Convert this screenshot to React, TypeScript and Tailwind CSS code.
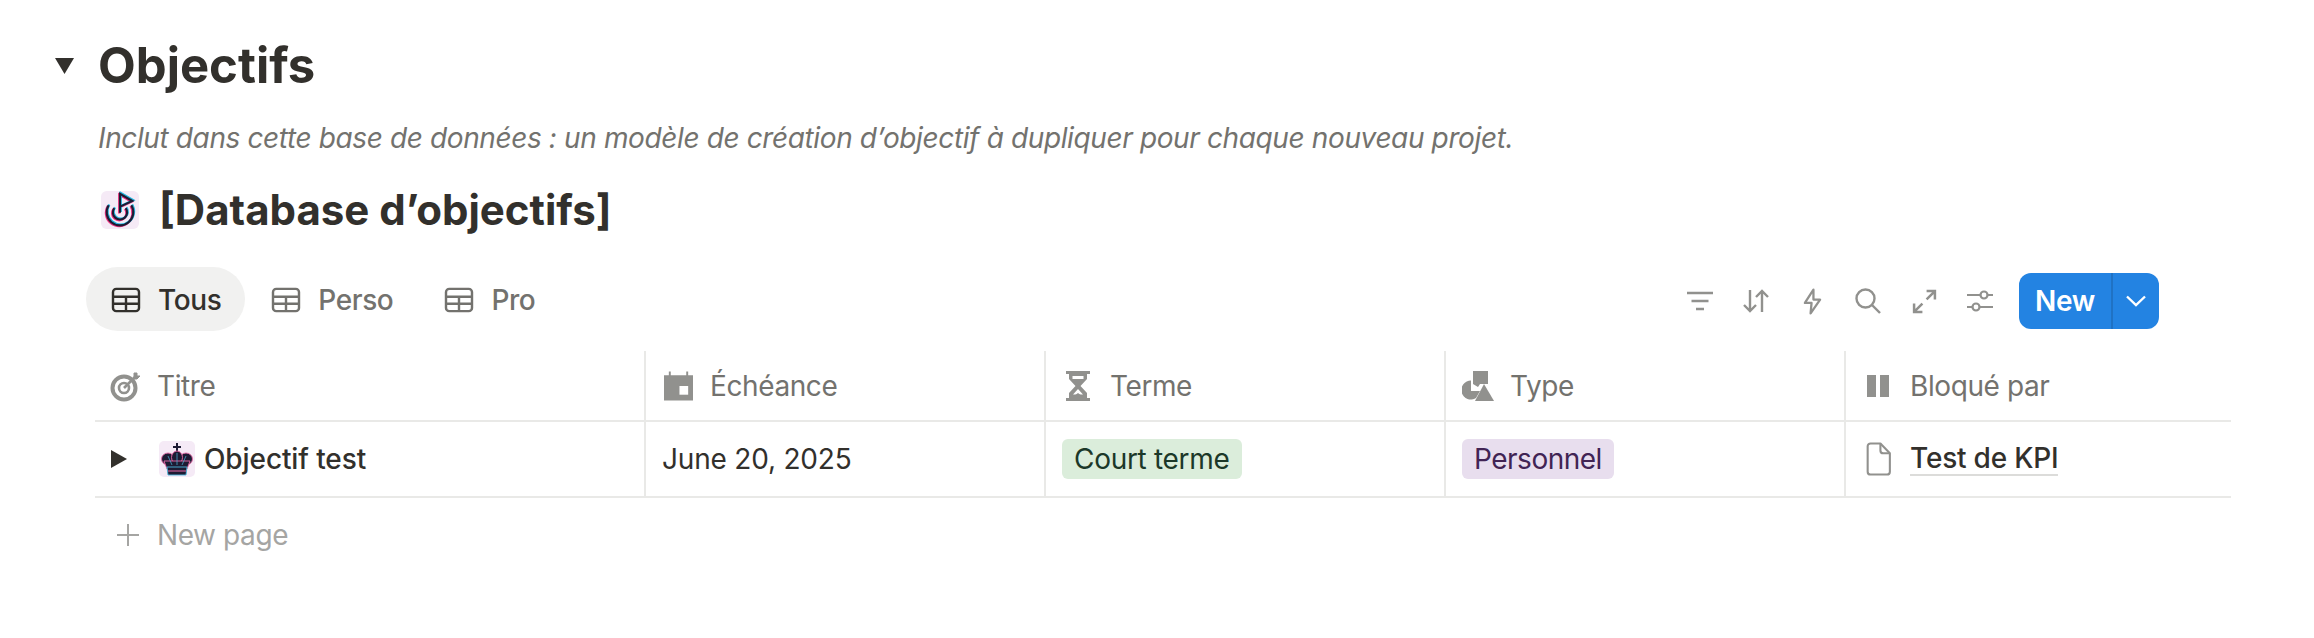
import React from "react";

const TableIcon = ({ className }: { className: string }) => (
  <svg viewBox="0 0 32 28" fill="none" stroke="currentColor" strokeWidth="2.6" className={className}>
    <rect x="2" y="2" width="28" height="24" rx="3.5" />
    <path d="M2 10.5h28M2 18h28M16 10.5V26" />
  </svg>
);

const FilterIcon = () => (
  <svg viewBox="0 0 26 20" className="h-[20px] w-[26px]" fill="none" stroke="currentColor" strokeWidth="2.4">
    <path d="M0 2h26M4.500 10h17M9 18h8" />
  </svg>
);

const SortIcon = () => (
  <svg viewBox="0 0 26 24" className="h-[24px] w-[26px]" fill="none" stroke="currentColor" strokeWidth="2.4">
    <path d="M7 1v21M1 16l6 6 6-6M19 23V2M13 8l6-6 6 6" />
  </svg>
);

const BoltIcon = () => (
  <svg viewBox="0 0 20 28" className="h-[27px] w-[19px]" fill="none" stroke="currentColor" strokeWidth="2.4" strokeLinejoin="round">
    <path d="M11 1.500 2 15.500h7l-1 11 10-14.500h-7z" />
  </svg>
);

const SearchIcon = () => (
  <svg viewBox="0 0 26 26" className="h-[26px] w-[26px]" fill="none" stroke="currentColor" strokeWidth="2.4">
    <circle cx="10.500" cy="10.500" r="9" />
    <path d="M17 17l8 8" />
  </svg>
);

const ExpandIcon = () => (
  <svg viewBox="0 0 24 24" className="h-[25px] w-[25px]" fill="none" stroke="currentColor" strokeWidth="2.4">
    <path d="M14 2h8v8M22 2l-8 8M10 14l-8 8M2 14v8h8" />
  </svg>
);

const SlidersIcon = () => (
  <svg viewBox="0 0 26 22" className="h-[22px] w-[26px]" fill="none" stroke="currentColor" strokeWidth="2.2">
    <path d="M0 5h13M21 5h5M0 17h5M13 17h13" />
    <circle cx="17" cy="5" r="3.500" />
    <circle cx="9" cy="17" r="3.500" />
  </svg>
);

const goalPath = "M8 15a14 14 0 1 0 24 0M14 18a7.500 7.500 0 1 0 12 0M20 23V3l13 7.500-13 6";

const GoalIcon = () => (
  <svg viewBox="0 0 40 40" className="h-[38px] w-[38px]" fill="none">
    <rect width="40" height="40" rx="6" fill="#f5eaf6" />
    <path d={goalPath} transform="translate(-0.8 0.8)" stroke="#ec2f7c" strokeWidth="2.400" />
    <path d={goalPath} transform="translate(0.8 -0.8)" stroke="#22b6e0" strokeWidth="2.400" />
    <path d={goalPath} stroke="#1d1b33" strokeWidth="2.200" />
  </svg>
);

const CrownIcon = () => (
  <svg viewBox="0 0 36 36" className="h-[36px] w-[36px]">
    <rect width="36" height="36" rx="5" fill="#f5eaf6" />
    <path d="M17 2h2v3h3v2h-3v4h-2V7h-3V5h3z" fill="#1d1b33" />
    <g fill="#1d1b33" stroke="#e86aa8" strokeWidth=".9">
      <ellipse cx="9" cy="18" rx="6.500" ry="6" />
      <ellipse cx="27" cy="18" rx="6.500" ry="6" />
      <ellipse cx="18" cy="16.500" rx="5.500" ry="6.500" />
      <path d="M5 20h26l-3 8H8z" />
    </g>
    <path d="M8 26h20l-1 8H9z" fill="#1d1b33" stroke="#4db8dc" strokeWidth=".9" />
    <path d="M9 30h18" stroke="#e86aa8" strokeWidth="1" />
    <path d="M18 12v12M9 15l4 9M27 15l-4 9" stroke="#4db8dc" strokeWidth=".7" fill="none" />
  </svg>
);

const TargetIcon = () => (
  <svg viewBox="0 0 30 32" className="h-[32px] w-[30px]" fill="none" stroke="#91918e">
    <circle cx="14" cy="18" r="11.500" strokeWidth="4" />
    <circle cx="14" cy="18" r="5" strokeWidth="2.600" />
    <path d="M14 18 26 6" strokeWidth="2.600" />
    <path d="M24 3h3v3h3l-3 3h-3V6z" fill="#91918e" strokeWidth="1" />
  </svg>
);

const CalendarIcon = () => (
  <svg viewBox="0 0 30 30" className="h-[30px] w-[29px]" fill="#91918e">
    <path d="M0 4h5V0h2v4h16V0h2v4h5v26H0z" />
    <rect x="16" y="15" width="9" height="9" fill="#fff" />
  </svg>
);

const HourglassIcon = () => (
  <svg viewBox="0 0 24 30" className="h-[30px] w-[24px]" fill="#91918e">
    <path d="M0 0h24v3H0zM0 27h24v3H0z" />
    <path d="M3 3h18v5l-6.500 7 6.500 7v5H3v-5l6.500-7L3 8z" />
    <path d="M6.500 5h11v3h-11zM12 18l5 5.500H7z" fill="#fff" />
    <path d="M8 25h8l-4-3z" fill="#91918e" />
  </svg>
);

const ShapesIcon = () => (
  <svg viewBox="0 0 32 30" className="h-[30px] w-[32px]" fill="#91918e">
    <path d="M11 0h15v13h-8l-2 3-5-3z" />
    <path d="M9 9.500a9.500 9.500 0 1 0 5 17.500l4-7h-9z" />
    <path d="M22 13l10 17H13z" />
  </svg>
);

const RelationIcon = () => (
  <svg viewBox="0 0 22 22" className="h-[24px] w-[22px]" fill="#91918e">
    <path d="M0 0h9v22H0zM13 0h9v22h-9z" />
  </svg>
);

const PageIcon = () => (
  <svg viewBox="0 0 26 36" className="h-[34px] w-[26px]" fill="none" stroke="#91918e" strokeWidth="2.200" strokeLinejoin="round">
    <path d="M4 1.500h10.500L24.500 12v19.500a3 3 0 0 1-3 3H4a3 3 0 0 1-3-3v-27a3 3 0 0 1 3-3z" />
    <path d="M14.500 1.500V9a3 3 0 0 0 3 3h7" />
  </svg>
);

const HeaderCell = ({ icon, label, className }: { icon: React.ReactNode; label: string; className: string }) => (
  <div className={`flex h-full items-center gap-[16px] border-r-2 border-[#e9e9e7] px-[16px] text-[28px] tracking-[-0.4px] text-[#73726e] last:border-r-0 ${className}`}>
    <span className="flex w-[32px] shrink-0 justify-center">{icon}</span>
    <span>{label}</span>
  </div>
);

export default function App() {
  return (
    <div className="min-h-screen w-[2314px] bg-white pt-[36px] font-['Inter',sans-serif] text-[#32302c]">
      <div className="flex items-center pl-[55px]">
        <svg viewBox="0 0 19 16" className="h-[16px] w-[19px]" fill="#32302c">
          <path d="M0 0h19L9.500 16z" />
        </svg>
        <h2 className="ml-[24px] text-[49px] leading-[60px] font-bold">Objectifs</h2>
      </div>

      <div className="pl-[95px] pr-[83px]">
        <p className="mt-[22px] pl-[3px] text-[28px] leading-[40px] tracking-[-0.38px] text-[#73726e] italic">
          Inclut dans cette base de données : un modèle de création d’objectif à dupliquer pour chaque nouveau projet.
        </p>

        <div className="mt-[27px] flex h-[50px] items-center gap-[20px] pl-[6px]">
          <GoalIcon />
          <h3 className="text-[42px] leading-[50px] font-bold">[Database d’objectifs]</h3>
        </div>

        <div className="mt-[32px] flex h-[64px] items-center justify-between pr-[72px]">
          <div className="-ml-[9px] flex items-center text-[28px] font-medium tracking-[-0.4px] text-[#73726e]">
            <div className="flex h-[64px] items-center gap-[16px] rounded-full bg-[#f1f1f0] px-[24px] pt-[2px] text-[#32302c]">
              <TableIcon className="h-[26px] w-[32px]" />
              Tous
            </div>
            <div className="flex h-[64px] items-center gap-[16px] px-[25px] pt-[2px]">
              <TableIcon className="h-[26px] w-[32px]" />
              Perso
            </div>
            <div className="flex h-[64px] items-center gap-[16px] px-[25px] pt-[2px]">
              <TableIcon className="h-[26px] w-[32px]" />
              Pro
            </div>
          </div>

          <div className="mt-[4px] flex items-center">
            <div className="flex items-center text-[#91918e]">
              {[FilterIcon, SortIcon, BoltIcon, SearchIcon, ExpandIcon, SlidersIcon].map((Icon, i) => (
                <span key={i} className="flex h-[56px] w-[56px] items-center justify-center">
                  <Icon />
                </span>
              ))}
            </div>
            <div className="ml-[11px] flex h-[56px] w-[140px] overflow-hidden rounded-[12px] bg-[#2383e2] text-white">
              <div className="flex flex-1 items-center justify-center border-r-2 border-[#1f72c4] text-[28px] font-semibold tracking-[-0.3px]">New</div>
              <div className="flex w-[46px] items-center justify-center">
                <svg viewBox="0 0 20 12" className="h-[12px] w-[20px]" fill="none" stroke="currentColor" strokeWidth="2.400">
                  <path d="M1 1.500 10 10l9-8.500" />
                </svg>
              </div>
            </div>
          </div>
        </div>

        <div className="mt-[19px] grid h-[72px] grid-cols-[551px_400px_400px_400px_385px] border-b-2 border-[#e9e9e7] pt-[1px]">
          <HeaderCell icon={<TargetIcon />} label="Titre" className="pl-[14px]" />
          <HeaderCell icon={<CalendarIcon />} label="Échéance" className="" />
          <HeaderCell icon={<HourglassIcon />} label="Terme" className="" />
          <HeaderCell icon={<ShapesIcon />} label="Type" className="" />
          <HeaderCell icon={<RelationIcon />} label="Bloqué par" className="" />
        </div>

        <div className="grid h-[76px] grid-cols-[551px_400px_400px_400px_385px] border-b-2 border-[#e9e9e7] text-[28px] tracking-[-0.2px] text-[#32302c]">
          <div className="flex items-center border-r-2 border-[#e9e9e7] pl-[16px]">
            <svg viewBox="0 0 16 18" className="h-[18px] w-[16px]" fill="#32302c">
              <path d="M0 0l16 9-16 9z" />
            </svg>
            <span className="ml-[32px]"><CrownIcon /></span>
            <span className="ml-[9px] font-medium tracking-[-0.1px]">Objectif test</span>
          </div>
          <div className="flex items-center border-r-2 border-[#e9e9e7] pl-[16px]">June 20, 2025</div>
          <div className="flex items-center border-r-2 border-[#e9e9e7] pl-[16px]">
            <span className="flex h-[40px] items-center rounded-[6px] bg-[#dbeddb] px-[12px] tracking-[-0.3px] text-[#1c3829]">Court terme</span>
          </div>
          <div className="flex items-center border-r-2 border-[#e9e9e7] pl-[16px]">
            <span className="flex h-[40px] items-center rounded-[6px] bg-[#e8deee] px-[12px] tracking-[-0.5px] text-[#412454]">Personnel</span>
          </div>
          <div className="flex items-center gap-[18px] pl-[20px]">
            <PageIcon />
            <span className="border-b-2 border-[#dcdcda] font-medium leading-[32px]">Test de KPI</span>
          </div>
        </div>

        <div className="flex h-[74px] items-center gap-[18px] pl-[22px] text-[28px] tracking-[-0.4px] text-[#a5a5a3]">
          <svg viewBox="0 0 22 22" className="h-[22px] w-[22px]" fill="none" stroke="currentColor" strokeWidth="2">
            <path d="M11 0v22M0 11h22" />
          </svg>
          New page
        </div>
      </div>
    </div>
  );
}
